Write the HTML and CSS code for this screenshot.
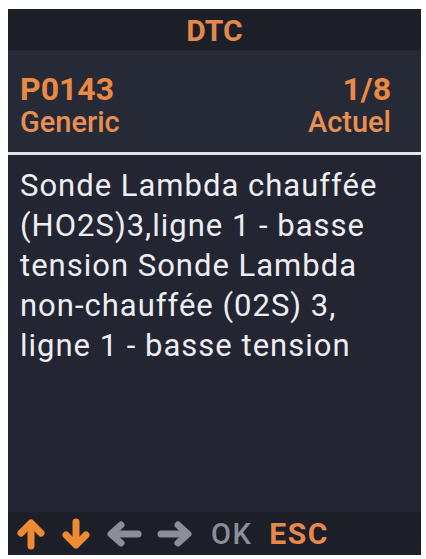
FILE: index.html
```html
<!DOCTYPE html>
<html lang="fr">
<head>
<meta charset="utf-8">
<title>DTC</title>
<link rel="stylesheet" href="styles.css">
</head>
<body>
<div class="screen">
  <div class="title">DTC</div>
  <div class="info">
    <div class="row">
      <span class="code">P0143</span>
      <span class="code">1/8</span>
    </div>
    <div class="row">
      <span class="sub">Generic</span>
      <span class="sub">Actuel</span>
    </div>
  </div>
  <div class="sep"></div>
  <div class="desc">Sonde Lambda chauffée (HO2S)3,ligne 1 - basse tension Sonde Lambda non-chauffée (02S) 3, ligne 1 - basse tension</div>
  <div class="footer">
    <svg class="ico" width="30" height="32" viewBox="0 0 30 32"><g fill="none" stroke="#f08a30" stroke-width="7" stroke-linecap="round" stroke-linejoin="round"><path d="M15 7 V28"/><path d="M5 15 L15 5 L25 15"/></g></svg>
    <svg class="ico" width="30" height="32" viewBox="0 0 30 32"><g fill="none" stroke="#f08a30" stroke-width="7" stroke-linecap="round" stroke-linejoin="round"><path d="M15 25 V4"/><path d="M5 17 L15 27 L25 17"/></g></svg>
    <svg class="ico" width="36" height="32" viewBox="0 0 36 32"><g fill="none" stroke="#8a8e98" stroke-width="7" stroke-linecap="round" stroke-linejoin="round"><path d="M7 16 H32"/><path d="M15 7 L5 16 L15 25"/></g></svg>
    <svg class="ico" width="36" height="32" viewBox="0 0 36 32"><g fill="none" stroke="#8a8e98" stroke-width="7" stroke-linecap="round" stroke-linejoin="round"><path d="M29 16 H4"/><path d="M21 7 L31 16 L21 25"/></g></svg>
    <span class="ok">OK</span>
    <span class="esc">ESC</span>
  </div>
</div>
</body>
</html>
```
FILE: styles.css
```css
html, body {
  margin: 0;
  padding: 0;
  background: #ffffff;
}
body {
  font-family: Roboto, "Liberation Sans", Arial, sans-serif;
}
.screen {
  margin: 9px 5px 0 8px;
  width: 413px;
  height: 546px;
  display: flex;
  flex-direction: column;
  background: #232632;
}
.title {
  height: 41px;
  flex: none;
  background: #1c1f28;
  color: #e28a4c;
  font-size: 30px;
  font-weight: 700;
  display: flex;
  align-items: center;
  justify-content: center;
  padding-top: 2px;
  box-sizing: border-box;
}
.info {
  height: 102px;
  flex: none;
  background: #262a37;
  padding: 22px 30px 0 12px;
  box-sizing: border-box;
  display: flex;
  flex-direction: column;
}
.row {
  display: flex;
  justify-content: space-between;
}
.code {
  color: #ec8a44;
  font-size: 32px;
  font-weight: 700;
  line-height: 34px;
}
.sub {
  color: #e89050;
  font-size: 29px;
  font-weight: 500;
  line-height: 32px;
}
.sep {
  height: 3px;
  flex: none;
  background: #e4e5ea;
}
.desc {
  flex: 1;
  color: #eeeef2;
  font-size: 31px;
  letter-spacing: 1px;
  line-height: 40px;
  padding: 11px 6px 0 12px;
}
.footer {
  height: 43px;
  flex: none;
  background: #1c1f28;
  display: flex;
  align-items: center;
  padding-left: 8px;
  gap: 15px;
}
.ico {
  display: block;
}
.ok {
  color: #8a8e98;
  font-size: 29px;
  font-weight: 500;
  letter-spacing: 1.5px;
  margin-left: 3px;
}
.esc {
  color: #e8884a;
  font-size: 30px;
  font-weight: 700;
  letter-spacing: 1.5px;
  margin-left: 2px;
}
```
